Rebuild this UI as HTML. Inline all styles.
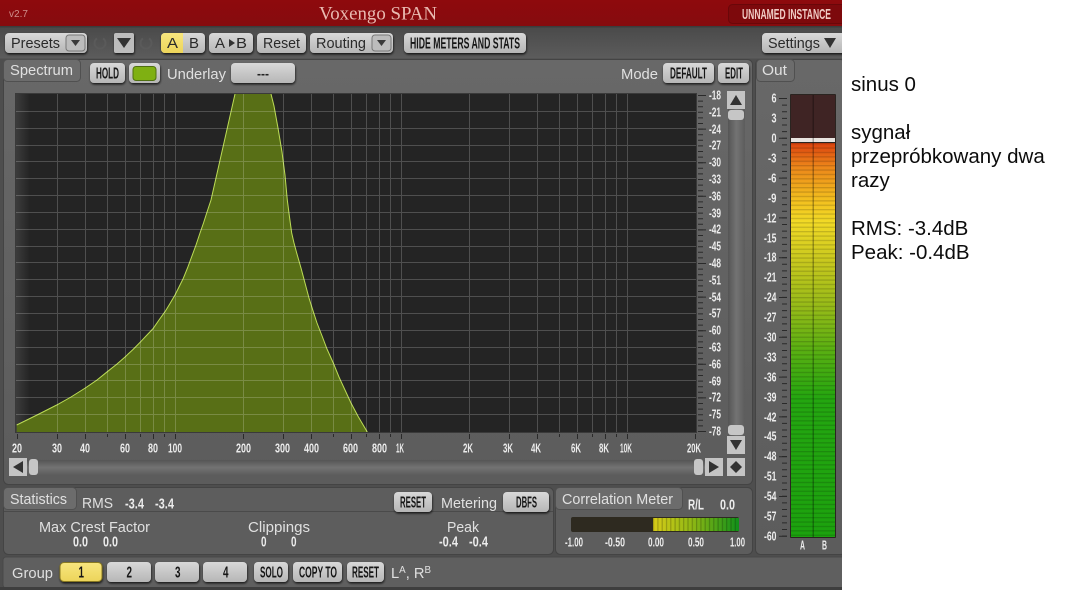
<!DOCTYPE html>
<html><head><meta charset="utf-8"><title>Voxengo SPAN</title>
<style>
html,body{margin:0;padding:0;background:#fff;width:1084px;height:590px;overflow:hidden}
svg{display:block}
text{font-family:"Liberation Sans",sans-serif}
.l{fill:#e0e0e0;font-size:15px}
.n{fill:#ececec;font-size:12.5px;font-weight:bold}
.m{fill:#ececec;font-size:15px;font-weight:bold}
.b{fill:#161616;font-size:16px;font-weight:bold}
.d{fill:#2a2a2a;font-size:15px}
.t{fill:#0c0c0c;font-size:20.5px}
</style></head><body>
<svg width="1084" height="590" viewBox="0 0 1084 590" xmlns="http://www.w3.org/2000/svg">
<defs>
<clipPath id="ui"><rect width="842" height="590"/></clipPath>
<linearGradient id="btn" x1="0" y1="0" x2="0" y2="1"><stop offset="0" stop-color="#d8d8d8"/><stop offset="1" stop-color="#b6b6b6"/></linearGradient>
<linearGradient id="yel" x1="0" y1="0" x2="0" y2="1"><stop offset="0" stop-color="#f8e67e"/><stop offset="1" stop-color="#ecd45a"/></linearGradient>
<linearGradient id="hdr" x1="0" y1="0" x2="0" y2="1"><stop offset="0" stop-color="#8e0a0d"/><stop offset="1" stop-color="#860b0e"/></linearGradient>
<linearGradient id="bar" x1="0" y1="0" x2="0" y2="1"><stop offset="0" stop-color="#4a4a4a"/><stop offset="1" stop-color="#5c5c5c"/></linearGradient>
<linearGradient id="pan" x1="0" y1="0" x2="0" y2="1"><stop offset="0" stop-color="#686868"/><stop offset="1" stop-color="#5c5c5c"/></linearGradient>
<linearGradient id="plot" x1="0" y1="0" x2="1" y2="0"><stop offset="0" stop-color="#3c3c3c"/><stop offset=".02" stop-color="#242424"/><stop offset="1" stop-color="#242424"/></linearGradient>
<linearGradient id="trk" x1="0" y1="0" x2="1" y2="0"><stop offset="0" stop-color="#555"/><stop offset=".5" stop-color="#737373"/><stop offset="1" stop-color="#5c5c5c"/></linearGradient>
<linearGradient id="trh" x1="0" y1="0" x2="0" y2="1"><stop offset="0" stop-color="#555"/><stop offset=".5" stop-color="#737373"/><stop offset="1" stop-color="#5c5c5c"/></linearGradient>
<linearGradient id="mtr" x1="0" y1="143" x2="0" y2="537" gradientUnits="userSpaceOnUse">
<stop offset="0" stop-color="#dc430e"/><stop offset=".06" stop-color="#ec861a"/><stop offset=".14" stop-color="#f2bc1e"/><stop offset=".2" stop-color="#f2da26"/><stop offset=".3" stop-color="#c8c81e"/><stop offset=".42" stop-color="#94ba18"/><stop offset=".52" stop-color="#5cb012"/><stop offset=".65" stop-color="#24a610"/><stop offset="1" stop-color="#1ca20e"/></linearGradient>
<linearGradient id="cor" x1="653" y1="0" x2="739" y2="0" gradientUnits="userSpaceOnUse"><stop offset="0" stop-color="#d8cc18"/><stop offset=".45" stop-color="#90b814"/><stop offset="1" stop-color="#10901a"/></linearGradient>
<pattern id="st" width="10" height="4.4" patternUnits="userSpaceOnUse" y="143"><rect width="10" height="1.3" fill="#000" opacity=".16"/></pattern>
<pattern id="sv" width="4.3" height="10" patternUnits="userSpaceOnUse" x="653"><rect width="1.2" height="10" fill="#000" opacity=".22"/></pattern>
<filter id="sh" x="-20%" y="-30%" width="140%" height="170%"><feDropShadow dx="0.5" dy="1.5" stdDeviation="1" flood-color="#000" flood-opacity=".75"/></filter>
</defs>

<rect width="1084" height="590" fill="#fff"/>
<g clip-path="url(#ui)">
<rect width="842" height="590" fill="#4e4e4e"/>

<!-- header -->
<rect width="842" height="26" fill="url(#hdr)"/>
<rect y="26" width="842" height="1.5" fill="#3c3c3c"/>
<text x="9" y="17" font-size="10" fill="#cf8f8c" textLength="19" lengthAdjust="spacingAndGlyphs">v2.7</text>
<text x="319" y="19.500" font-size="19" fill="#e9bab1" style='font-family:"Liberation Serif",serif' textLength="118" lengthAdjust="spacingAndGlyphs">Voxengo SPAN</text>
<rect x="728.500" y="4.500" width="120" height="19" rx="4" fill="#7d090c" stroke="#6a0709"/>
<text x="742" y="19" font-size="15" font-weight="bold" fill="#f0cbc4" textLength="89" lengthAdjust="spacingAndGlyphs">UNNAMED INSTANCE</text>

<!-- toolbar -->
<rect y="27.500" width="842" height="31" fill="url(#bar)"/>
<g filter="url(#sh)">
<rect x="5" y="33" width="82" height="20" rx="4" fill="url(#btn)"/>
<rect x="114" y="33" width="20" height="20" rx="2" fill="#bdbdbd"/>
<rect x="161" y="33" width="44" height="20" rx="4" fill="url(#btn)"/>
<rect x="209" y="33" width="44" height="20" rx="4" fill="url(#btn)"/>
<rect x="257" y="33" width="49" height="20" rx="4" fill="url(#btn)"/>
<rect x="310" y="33" width="83" height="20" rx="4" fill="url(#btn)"/>
<rect x="404" y="33" width="122" height="20" rx="4" fill="url(#btn)"/>
<rect x="762" y="33" width="84" height="20" rx="4" fill="url(#btn)"/>
</g>
<path d="M165 33h18v20h-18a4 4 0 0 1-4-4v-12a4 4 0 0 1 4-4z" fill="url(#yel)"/>
<rect x="66" y="35" width="19" height="16" rx="3" fill="#bcbcbc" stroke="#777"/>
<polygon points="71,40 80,40 75.500,46" fill="#3a3a3a"/>
<rect x="372" y="35" width="19" height="16" rx="3" fill="#bcbcbc" stroke="#777"/>
<polygon points="377,40 386,40 381.500,46" fill="#3a3a3a"/>
<polygon points="117,38 131,38 124,48" fill="#333"/>
<path d="M97 38.500a5.500 5.500 0 1 0 6 0" fill="none" stroke="#5a5a5a" stroke-width="2"/>
<path d="M143 38.500a5.500 5.500 0 1 0 6 0" fill="none" stroke="#5a5a5a" stroke-width="2"/>
<text x="11" y="48" class="d" textLength="49" lengthAdjust="spacingAndGlyphs">Presets</text>
<text x="167" y="48" class="d" textLength="11" lengthAdjust="spacingAndGlyphs">A</text>
<text x="189" y="48" class="d" textLength="10" lengthAdjust="spacingAndGlyphs">B</text>
<text x="215" y="48" class="d" textLength="10" lengthAdjust="spacingAndGlyphs">A</text>
<polygon points="229,39 229,47 235,43" fill="#333"/>
<text x="236" y="48" class="d" textLength="11" lengthAdjust="spacingAndGlyphs">B</text>
<text x="263" y="48" class="d" textLength="37" lengthAdjust="spacingAndGlyphs">Reset</text>
<text x="316" y="48" class="d" textLength="50" lengthAdjust="spacingAndGlyphs">Routing</text>
<text x="410" y="48.500" class="b" textLength="110" lengthAdjust="spacingAndGlyphs">HIDE METERS AND STATS</text>
<text x="768" y="48" class="d" textLength="52" lengthAdjust="spacingAndGlyphs">Settings</text>
<polygon points="824,38 836,38 830,48" fill="#333"/>

<!-- panels -->
<rect x="3.500" y="59.500" width="749" height="425" rx="5" fill="url(#pan)" stroke="#444"/>
<rect x="3.500" y="59.500" width="77" height="22" rx="4" fill="#6c6c6c" stroke="#505050"/>
<rect x="755.500" y="59.500" width="90" height="495" rx="5" fill="url(#pan)" stroke="#444"/>
<rect x="756.500" y="59.500" width="38" height="22" rx="4" fill="#6c6c6c" stroke="#505050"/>
<rect x="3.500" y="487.500" width="550" height="67" rx="5" fill="#5d5d5d" stroke="#444"/>
<rect x="4" y="511" width="549" height="1" fill="#4a4a4a"/>
<rect x="3.500" y="487.500" width="73" height="22" rx="4" fill="#6c6c6c" stroke="#505050"/>
<rect x="555.500" y="487.500" width="197" height="67" rx="5" fill="#5d5d5d" stroke="#444"/>
<rect x="555.500" y="487.500" width="127" height="22" rx="4" fill="#6c6c6c" stroke="#505050"/>
<rect x="3" y="557" width="842" height="31" rx="3" fill="#5f5f5f" stroke="#484848"/>
<rect y="587" width="842" height="3" fill="#3e3e3e"/>

<!-- spectrum top row -->
<text x="10" y="75" class="l" textLength="63" lengthAdjust="spacingAndGlyphs">Spectrum</text>
<g filter="url(#sh)">
<rect x="90" y="63" width="35" height="20" rx="4" fill="url(#btn)"/>
<rect x="129" y="63" width="31" height="20" rx="4" fill="url(#btn)"/>
<rect x="231" y="63" width="64" height="20" rx="4" fill="url(#btn)"/>
<rect x="663" y="63" width="51" height="20" rx="4" fill="url(#btn)"/>
<rect x="718" y="63" width="31" height="20" rx="4" fill="url(#btn)"/>
</g>
<rect x="133" y="66.500" width="23" height="14" rx="3" fill="#7fb012" stroke="#4f6f10"/>
<text x="96" y="78.500" class="b" textLength="23" lengthAdjust="spacingAndGlyphs">HOLD</text>
<text x="167" y="79" class="l" textLength="59" lengthAdjust="spacingAndGlyphs">Underlay</text>
<text x="257" y="78" class="n" style="fill:#222" textLength="12" lengthAdjust="spacingAndGlyphs">---</text>
<text x="621" y="79" class="l" textLength="37" lengthAdjust="spacingAndGlyphs">Mode</text>
<text x="670" y="78.500" class="b" textLength="37" lengthAdjust="spacingAndGlyphs">DEFAULT</text>
<text x="725" y="78.500" class="b" textLength="18" lengthAdjust="spacingAndGlyphs">EDIT</text>
<text x="762" y="75" class="l" textLength="25" lengthAdjust="spacingAndGlyphs">Out</text>

<!-- plot -->
<rect x="16" y="94" width="680" height="338" fill="url(#plot)"/>
<polygon points="16.700,432 16.700,425 37,415 56.700,405 71,397 85.300,388 97,380 107.300,371.700 117,364 125.300,356.700 133,349.500 140.700,341.700 147,335 153.300,328.300 159,320 165,311.700 170,303.500 175,295 179,287 183.300,278.300 187.500,268 191.700,256.700 196,245 200,233 203.500,223 206.700,213 209,206 211,200 235,94 271,94 274,106 278,128 282,152 285,175 287.300,200 289.500,217 291.700,233 294,243 296.700,253 301,268 305,283 309,298 313.300,311.700 317,323 321.700,335 327,349 333.300,363 339,377 345,390 351,403 358.300,416.700 367.300,432" fill="#586f16"/>
<polyline points="16.700,425 37,415 56.700,405 71,397 85.300,388 97,380 107.300,371.700 117,364 125.300,356.700 133,349.500 140.700,341.700 147,335 153.300,328.300 159,320 165,311.700 170,303.500 175,295 179,287 183.300,278.300 187.500,268 191.700,256.700 196,245 200,233 203.500,223 206.700,213 209,206 211,200 235,94" fill="none" stroke="#bcdc55"/>
<polyline points="271,94 274,106 278,128 282,152 285,175 287.300,200 289.500,217 291.700,233 294,243 296.700,253 301,268 305,283 309,298 313.300,311.700 317,323 321.700,335 327,349 333.300,363 339,377 345,390 351,403 358.300,416.700 367.300,432" fill="none" stroke="#bcdc55"/>
<path d="M57.500 94V432M85.500 94V432M107.500 94V432M125.500 94V432M140.500 94V432M153.500 94V432M164.500 94V432M175.500 94V432M243.500 94V432M283.500 94V432M311.500 94V432M333.500 94V432M351.500 94V432M366.500 94V432M379.500 94V432M390.500 94V432M401.500 94V432M469.500 94V432M509.500 94V432M537.500 94V432M559.500 94V432M577.500 94V432M592.500 94V432M605.500 94V432M616.500 94V432M627.500 94V432M16 111.500H696M16 128.500H696M16 145.500H696M16 161.500H696M16 178.500H696M16 195.500H696M16 212.500H696M16 229.500H696M16 246.500H696M16 262.500H696M16 279.500H696M16 296.500H696M16 313.500H696M16 330.500H696M16 347.500H696M16 364.500H696M16 380.500H696M16 397.500H696M16 414.500H696" stroke="#fff" stroke-opacity=".2" fill="none"/>
<rect x="15.500" y="93.500" width="681" height="339" fill="none" stroke="#3a3a3a"/>

<!-- right scale -->
<path d="M700.500 95V432" stroke="#2a2a2a" stroke-width="5" stroke-dasharray="1 4.600" fill="none"/>
<path d="M702 95V432" stroke="#2a2a2a" stroke-width="8" stroke-dasharray="1 32.600" fill="none"/>
<text x="709" y="99.500" class="n" textLength="12" lengthAdjust="spacingAndGlyphs">-18</text>
<text x="709" y="116.500" class="n" textLength="12" lengthAdjust="spacingAndGlyphs">-21</text>
<text x="709" y="133.500" class="n" textLength="12" lengthAdjust="spacingAndGlyphs">-24</text>
<text x="709" y="149.500" class="n" textLength="12" lengthAdjust="spacingAndGlyphs">-27</text>
<text x="709" y="166.500" class="n" textLength="12" lengthAdjust="spacingAndGlyphs">-30</text>
<text x="709" y="183.500" class="n" textLength="12" lengthAdjust="spacingAndGlyphs">-33</text>
<text x="709" y="200.500" class="n" textLength="12" lengthAdjust="spacingAndGlyphs">-36</text>
<text x="709" y="217.500" class="n" textLength="12" lengthAdjust="spacingAndGlyphs">-39</text>
<text x="709" y="233.500" class="n" textLength="12" lengthAdjust="spacingAndGlyphs">-42</text>
<text x="709" y="250.500" class="n" textLength="12" lengthAdjust="spacingAndGlyphs">-45</text>
<text x="709" y="267.500" class="n" textLength="12" lengthAdjust="spacingAndGlyphs">-48</text>
<text x="709" y="284.500" class="n" textLength="12" lengthAdjust="spacingAndGlyphs">-51</text>
<text x="709" y="301.500" class="n" textLength="12" lengthAdjust="spacingAndGlyphs">-54</text>
<text x="709" y="317.500" class="n" textLength="12" lengthAdjust="spacingAndGlyphs">-57</text>
<text x="709" y="334.500" class="n" textLength="12" lengthAdjust="spacingAndGlyphs">-60</text>
<text x="709" y="351.500" class="n" textLength="12" lengthAdjust="spacingAndGlyphs">-63</text>
<text x="709" y="368.500" class="n" textLength="12" lengthAdjust="spacingAndGlyphs">-66</text>
<text x="709" y="385.500" class="n" textLength="12" lengthAdjust="spacingAndGlyphs">-69</text>
<text x="709" y="401.500" class="n" textLength="12" lengthAdjust="spacingAndGlyphs">-72</text>
<text x="709" y="418.500" class="n" textLength="12" lengthAdjust="spacingAndGlyphs">-75</text>
<text x="709" y="435.500" class="n" textLength="12" lengthAdjust="spacingAndGlyphs">-78</text>

<!-- v scrollbar -->
<rect x="728" y="109" width="17" height="327" fill="url(#trk)"/>
<rect x="727" y="91" width="18" height="18" fill="#c4c4c4"/>
<polygon points="730,105 742,105 736,95" fill="#333"/>
<rect x="728" y="110" width="16" height="10" rx="3" fill="#c6c6c6"/>
<rect x="728" y="425" width="16" height="10" rx="3" fill="#c6c6c6"/>
<rect x="727" y="436" width="18" height="18" fill="#c4c4c4"/>
<polygon points="730,440 742,440 736,450" fill="#333"/>

<!-- freq ticks + labels -->
<path d="M17.500 434v5M57.500 434v5M85.500 434v5M107.500 434v3M125.500 434v5M140.500 434v3M153.500 434v5M164.500 434v3M175.500 434v5M243.500 434v5M283.500 434v5M311.500 434v5M333.500 434v3M351.500 434v5M366.500 434v3M379.500 434v5M390.500 434v3M401.500 434v5M469.500 434v5M509.500 434v5M537.500 434v5M559.500 434v3M577.500 434v5M592.500 434v3M605.500 434v5M616.500 434v3M627.500 434v5M695.500 434v5" stroke="#2a2a2a" fill="none"/>
<text x="12" y="452.500" class="n" textLength="10" lengthAdjust="spacingAndGlyphs">20</text>
<text x="52" y="452.500" class="n" textLength="10" lengthAdjust="spacingAndGlyphs">30</text>
<text x="80" y="452.500" class="n" textLength="10" lengthAdjust="spacingAndGlyphs">40</text>
<text x="120" y="452.500" class="n" textLength="10" lengthAdjust="spacingAndGlyphs">60</text>
<text x="148" y="452.500" class="n" textLength="10" lengthAdjust="spacingAndGlyphs">80</text>
<text x="168" y="452.500" class="n" textLength="14" lengthAdjust="spacingAndGlyphs">100</text>
<text x="236" y="452.500" class="n" textLength="15" lengthAdjust="spacingAndGlyphs">200</text>
<text x="275" y="452.500" class="n" textLength="15" lengthAdjust="spacingAndGlyphs">300</text>
<text x="304" y="452.500" class="n" textLength="15" lengthAdjust="spacingAndGlyphs">400</text>
<text x="343" y="452.500" class="n" textLength="15" lengthAdjust="spacingAndGlyphs">600</text>
<text x="372" y="452.500" class="n" textLength="15" lengthAdjust="spacingAndGlyphs">800</text>
<text x="396" y="452.500" class="n" textLength="8" lengthAdjust="spacingAndGlyphs">1K</text>
<text x="463" y="452.500" class="n" textLength="10" lengthAdjust="spacingAndGlyphs">2K</text>
<text x="503" y="452.500" class="n" textLength="10" lengthAdjust="spacingAndGlyphs">3K</text>
<text x="531" y="452.500" class="n" textLength="10" lengthAdjust="spacingAndGlyphs">4K</text>
<text x="571" y="452.500" class="n" textLength="10" lengthAdjust="spacingAndGlyphs">6K</text>
<text x="599" y="452.500" class="n" textLength="10" lengthAdjust="spacingAndGlyphs">8K</text>
<text x="620" y="452.500" class="n" textLength="12" lengthAdjust="spacingAndGlyphs">10K</text>
<text x="687" y="452.500" class="n" textLength="14" lengthAdjust="spacingAndGlyphs">20K</text>

<!-- h scrollbar -->
<rect x="27" y="460" width="678" height="15" fill="url(#trh)"/>
<rect x="9" y="458" width="18" height="18" fill="#c4c4c4"/>
<polygon points="23,461 23,473 13,467" fill="#333"/>
<rect x="29" y="459" width="9" height="16" rx="3" fill="#c6c6c6"/>
<rect x="694" y="459" width="9" height="16" rx="3" fill="#c6c6c6"/>
<rect x="705" y="458" width="18" height="18" fill="#c4c4c4"/>
<polygon points="709,461 709,473 719,467" fill="#333"/>
<rect x="727" y="458" width="18" height="18" fill="#c4c4c4"/>
<polygon points="736,461 742,467 736,473 730,467" fill="#333"/>

<!-- meter -->
<rect x="790" y="94" width="46" height="444" rx="1" fill="#2a2420"/>
<rect x="791" y="95" width="44" height="43" fill="#3f2424"/>
<rect x="791" y="138" width="44" height="4" fill="#e8e4e0"/>
<rect x="791" y="143" width="44" height="394" fill="url(#mtr)"/>
<rect x="791" y="143" width="44" height="394" fill="url(#st)"/>
<rect x="812.500" y="95" width="1.500" height="442" fill="#000" opacity=".3"/>
<path d="M784.500 98V537" stroke="#2a2a2a" stroke-width="5" stroke-dasharray="1 5.630" fill="none"/>
<path d="M783 98V537" stroke="#2a2a2a" stroke-width="8" stroke-dasharray="1 38.800" fill="none"/>
<text x="771.500" y="102.500" class="n" textLength="5" lengthAdjust="spacingAndGlyphs">6</text>
<text x="771.500" y="122.500" class="n" textLength="5" lengthAdjust="spacingAndGlyphs">3</text>
<text x="771.500" y="142.500" class="n" textLength="5" lengthAdjust="spacingAndGlyphs">0</text>
<text x="768" y="162.500" class="n" textLength="8.500" lengthAdjust="spacingAndGlyphs">-3</text>
<text x="768" y="182.500" class="n" textLength="8.500" lengthAdjust="spacingAndGlyphs">-6</text>
<text x="768" y="202.500" class="n" textLength="8.500" lengthAdjust="spacingAndGlyphs">-9</text>
<text x="764" y="222.500" class="n" textLength="12.500" lengthAdjust="spacingAndGlyphs">-12</text>
<text x="764" y="242.500" class="n" textLength="12.500" lengthAdjust="spacingAndGlyphs">-15</text>
<text x="764" y="261.500" class="n" textLength="12.500" lengthAdjust="spacingAndGlyphs">-18</text>
<text x="764" y="281.500" class="n" textLength="12.500" lengthAdjust="spacingAndGlyphs">-21</text>
<text x="764" y="301.500" class="n" textLength="12.500" lengthAdjust="spacingAndGlyphs">-24</text>
<text x="764" y="321.500" class="n" textLength="12.500" lengthAdjust="spacingAndGlyphs">-27</text>
<text x="764" y="341.500" class="n" textLength="12.500" lengthAdjust="spacingAndGlyphs">-30</text>
<text x="764" y="361.500" class="n" textLength="12.500" lengthAdjust="spacingAndGlyphs">-33</text>
<text x="764" y="381.500" class="n" textLength="12.500" lengthAdjust="spacingAndGlyphs">-36</text>
<text x="764" y="401.500" class="n" textLength="12.500" lengthAdjust="spacingAndGlyphs">-39</text>
<text x="764" y="421.500" class="n" textLength="12.500" lengthAdjust="spacingAndGlyphs">-42</text>
<text x="764" y="440.500" class="n" textLength="12.500" lengthAdjust="spacingAndGlyphs">-45</text>
<text x="764" y="460.500" class="n" textLength="12.500" lengthAdjust="spacingAndGlyphs">-48</text>
<text x="764" y="480.500" class="n" textLength="12.500" lengthAdjust="spacingAndGlyphs">-51</text>
<text x="764" y="500.500" class="n" textLength="12.500" lengthAdjust="spacingAndGlyphs">-54</text>
<text x="764" y="520.500" class="n" textLength="12.500" lengthAdjust="spacingAndGlyphs">-57</text>
<text x="764" y="540.500" class="n" textLength="12.500" lengthAdjust="spacingAndGlyphs">-60</text>
<text x="800" y="549.500" class="n" textLength="5" lengthAdjust="spacingAndGlyphs">A</text>
<text x="822" y="549.500" class="n" textLength="5" lengthAdjust="spacingAndGlyphs">B</text>

<!-- statistics -->
<text x="10" y="504" class="l" textLength="57" lengthAdjust="spacingAndGlyphs">Statistics</text>
<text x="82" y="508" class="l" textLength="31" lengthAdjust="spacingAndGlyphs">RMS</text>
<text x="125" y="508.500" class="m" textLength="19" lengthAdjust="spacingAndGlyphs">-3.4</text>
<text x="155" y="508.500" class="m" textLength="19" lengthAdjust="spacingAndGlyphs">-3.4</text>
<text x="39" y="532" class="l" textLength="111" lengthAdjust="spacingAndGlyphs">Max Crest Factor</text>
<text x="73" y="546.500" class="m" textLength="15" lengthAdjust="spacingAndGlyphs">0.0</text>
<text x="103" y="546.500" class="m" textLength="15" lengthAdjust="spacingAndGlyphs">0.0</text>
<text x="248" y="532" class="l" textLength="62" lengthAdjust="spacingAndGlyphs">Clippings</text>
<text x="261" y="546.500" class="m" textLength="5.500" lengthAdjust="spacingAndGlyphs">0</text>
<text x="291" y="546.500" class="m" textLength="5.500" lengthAdjust="spacingAndGlyphs">0</text>
<g filter="url(#sh)">
<rect x="394" y="492" width="38" height="20" rx="4" fill="url(#btn)"/>
<rect x="503" y="492" width="46" height="20" rx="4" fill="url(#btn)"/>
</g>
<text x="400" y="507.500" class="b" textLength="26" lengthAdjust="spacingAndGlyphs">RESET</text>
<text x="441" y="508" class="l" textLength="56" lengthAdjust="spacingAndGlyphs">Metering</text>
<text x="516" y="507.500" class="b" textLength="21" lengthAdjust="spacingAndGlyphs">DBFS</text>
<text x="447" y="532" class="l" textLength="32" lengthAdjust="spacingAndGlyphs">Peak</text>
<text x="439" y="546.500" class="m" textLength="19" lengthAdjust="spacingAndGlyphs">-0.4</text>
<text x="469" y="546.500" class="m" textLength="19" lengthAdjust="spacingAndGlyphs">-0.4</text>

<!-- correlation -->
<text x="562" y="504" class="l" textLength="111" lengthAdjust="spacingAndGlyphs">Correlation Meter</text>
<text x="688" y="509.500" class="m" textLength="16" lengthAdjust="spacingAndGlyphs">R/L</text>
<text x="720" y="509.500" class="m" textLength="15" lengthAdjust="spacingAndGlyphs">0.0</text>
<rect x="571" y="517" width="168" height="15" rx="2" fill="#2e2a20"/>
<rect x="653" y="518" width="86" height="13" fill="url(#cor)"/>
<rect x="653" y="518" width="86" height="13" fill="url(#sv)"/>
<text x="565" y="546.500" class="n" textLength="18" lengthAdjust="spacingAndGlyphs">-1.00</text>
<text x="605" y="546.500" class="n" textLength="20" lengthAdjust="spacingAndGlyphs">-0.50</text>
<text x="648" y="546.500" class="n" textLength="16" lengthAdjust="spacingAndGlyphs">0.00</text>
<text x="688" y="546.500" class="n" textLength="16" lengthAdjust="spacingAndGlyphs">0.50</text>
<text x="730" y="546.500" class="n" textLength="15" lengthAdjust="spacingAndGlyphs">1.00</text>

<!-- group -->
<text x="12" y="578" class="l" textLength="41" lengthAdjust="spacingAndGlyphs">Group</text>
<g filter="url(#sh)">
<rect x="60" y="562.500" width="42" height="19" rx="4" fill="url(#yel)" stroke="#8a7a20"/>
<rect x="107" y="562" width="44" height="20" rx="4" fill="url(#btn)"/>
<rect x="155" y="562" width="44" height="20" rx="4" fill="url(#btn)"/>
<rect x="203" y="562" width="44" height="20" rx="4" fill="url(#btn)"/>
<rect x="254" y="562" width="34" height="20" rx="4" fill="url(#btn)"/>
<rect x="293" y="562" width="49" height="20" rx="4" fill="url(#btn)"/>
<rect x="347" y="562" width="37" height="20" rx="4" fill="url(#btn)"/>
</g>
<text x="78.500" y="577.500" class="b" textLength="5.500" lengthAdjust="spacingAndGlyphs">1</text>
<text x="126.500" y="577.500" class="b" textLength="5.500" lengthAdjust="spacingAndGlyphs">2</text>
<text x="175" y="577.500" class="b" textLength="5.500" lengthAdjust="spacingAndGlyphs">3</text>
<text x="223" y="577.500" class="b" textLength="5.500" lengthAdjust="spacingAndGlyphs">4</text>
<text x="260" y="577.500" class="b" textLength="23" lengthAdjust="spacingAndGlyphs">SOLO</text>
<text x="299" y="577.500" class="b" textLength="38" lengthAdjust="spacingAndGlyphs">COPY TO</text>
<text x="352" y="577.500" class="b" textLength="27" lengthAdjust="spacingAndGlyphs">RESET</text>
<text x="391" y="578" class="l" textLength="40" lengthAdjust="spacingAndGlyphs">L<tspan style="font-size:10px" dy="-5">A</tspan><tspan dy="5">, R</tspan><tspan style="font-size:10px" dy="-5">B</tspan></text>
</g>

<!-- right notes -->
<text x="851" y="91" class="t">sinus 0</text>
<text x="851" y="139" class="t">sygnał</text>
<text x="851" y="163" class="t">przepróbkowany dwa</text>
<text x="851" y="187" class="t">razy</text>
<text x="851" y="235" class="t">RMS: -3.4dB</text>
<text x="851" y="259" class="t">Peak: -0.4dB</text>
</svg>
</body></html>
